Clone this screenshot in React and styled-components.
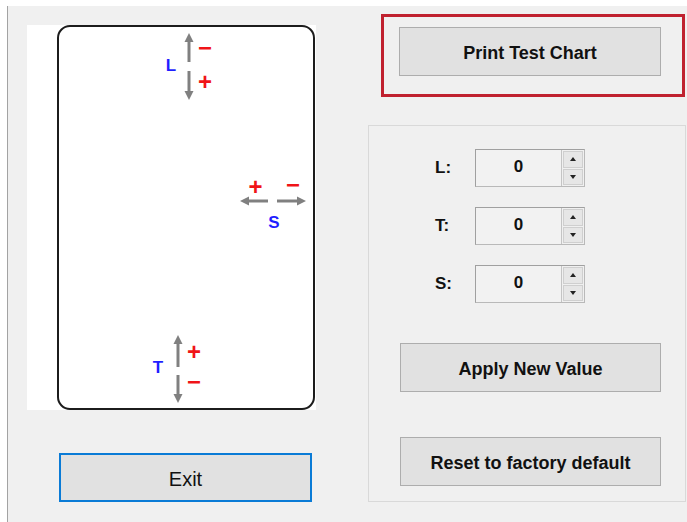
import React from "react";
import styled, { createGlobalStyle } from "styled-components";

const GlobalStyle = createGlobalStyle`
  html, body {
    margin: 0;
    padding: 0;
    background: #ffffff;
    font-family: "Liberation Sans", Arial, sans-serif;
  }
`;

const Window = styled.div`
  display: flex;
  align-items: flex-start;
  margin: 6px 0 0 7px;
  height: 516px;
  border-left: 1px solid #a3a3a3;
  background: #f0f0f0;
  box-sizing: border-box;
`;

const LeftCol = styled.div`
  display: flex;
  flex-direction: column;
  padding: 19px 0 0 19px;
  width: 289px;
  flex-shrink: 0;
`;

const Picture = styled.div`
  width: 289px;
  height: 385px;
  background: #ffffff;
  display: flex;
`;

const Card = styled.div`
  position: relative;
  margin-left: 30px;
  width: 258px;
  height: 385px;
  box-sizing: border-box;
  border: 2px solid #1c1c1c;
  border-radius: 13px;
`;

const Arrows = styled.svg`
  position: absolute;
  left: 0;
  top: 0;
  width: 100%;
  height: 100%;
`;

const Mark = styled.span`
  position: absolute;
  transform: translate(-50%, -50%);
  line-height: 1;
  font-weight: bold;
  font-family: "Liberation Sans", Arial, sans-serif;
  font-size: ${(p) => (p.$sign ? "24px" : "17px")};
  color: ${(p) => (p.$sign ? "#f01418" : "#1f1fff")};
  white-space: nowrap;
`;

const Button = styled.button`
  display: flex;
  align-items: center;
  justify-content: center;
  width: 262px;
  height: 49px;
  padding: 3px 0 0;
  box-sizing: border-box;
  background: #e1e1e1;
  border: 1px solid #adadad;
  font-family: "Liberation Sans", Arial, sans-serif;
  font-size: 18px;
  font-weight: bold;
  color: #111;
  margin-top: ${(p) => p.$top || 0}px;
`;

const ExitButton = styled(Button)`
  width: 253px;
  margin: 43px 0 0 32px;
  border: 2px solid #0a7bd6;
  font-weight: normal;
  font-size: 20px;
`;

const RightCol = styled.div`
  display: flex;
  flex-direction: column;
  margin: 8px 0 0 52px;
`;

const Highlight = styled.div`
  margin-left: 13px;
  width: 304px;
  height: 83px;
  box-sizing: border-box;
  border: 3px solid #c0212f;
  padding: 10px 0 0 15px;
`;

const GroupBox = styled.div`
  display: flex;
  flex-direction: column;
  margin-top: 28px;
  width: 318px;
  height: 377px;
  box-sizing: border-box;
  border: 1px solid #d9d9d9;
  padding: 23px 0 0 31px;
`;

const SpinRow = styled.div`
  display: flex;
  align-items: center;
  height: 38px;
  margin-bottom: 20px;
`;

const SpinLabel = styled.span`
  width: 40px;
  margin-left: 35px;
  font-size: 17px;
  font-weight: bold;
  color: #111;
`;

const Spinner = styled.div`
  display: flex;
  width: 110px;
  height: 38px;
  box-sizing: border-box;
  border: 1px solid #b9b9b9;
  border-top-color: #a0a0a0;
  border-left-color: #a0a0a0;
`;

const Field = styled.div`
  flex: 1;
  display: flex;
  align-items: center;
  justify-content: center;
  background: #f2f2f2;
  border-right: 1px solid #c4c4c4;
  font-size: 17px;
  font-weight: bold;
  color: #111;
  padding-bottom: 3px;
`;

const Steps = styled.div`
  display: flex;
  flex-direction: column;
  width: 22px;
  padding: 1px;
  gap: 1px;
  box-sizing: border-box;
`;

const Step = styled.div`
  flex: 1;
  display: flex;
  align-items: center;
  justify-content: center;
  background: #e6e6e6;
  border: 1px solid #cfcfcf;

  &::after {
    content: "";
    border-left: 3.5px solid transparent;
    border-right: 3.5px solid transparent;
    ${(p) =>
      p.$down ? "border-top: 4px solid #222;" : "border-bottom: 4px solid #222;"}
  }
`;

const GroupButton = styled(Button)`
  width: 261px;
`;

const arrowColor = "#808080";

const Arrow = ({ x1, y1, x2, y2 }) => {
  const dx = x2 - x1;
  const dy = y2 - y1;
  const len = Math.hypot(dx, dy);
  const ux = dx / len;
  const uy = dy / len;
  const head = 9;
  const half = 4.5;
  const bx = x2 - ux * head;
  const by = y2 - uy * head;
  const pts = `${x2},${y2} ${bx - uy * half},${by + ux * half} ${bx + uy * half},${by - ux * half}`;
  return (
    <g>
      <line x1={x1} y1={y1} x2={bx} y2={by} stroke={arrowColor} strokeWidth="3" />
      <polygon points={pts} fill={arrowColor} />
    </g>
  );
};

const Spin = ({ label }) => (
  <SpinRow>
    <SpinLabel>{label}</SpinLabel>
    <Spinner>
      <Field>0</Field>
      <Steps>
        <Step />
        <Step $down />
      </Steps>
    </Spinner>
  </SpinRow>
);

export default function App() {
  return (
    <>
      <GlobalStyle />
      <Window>
        <LeftCol>
          <Picture>
            <Card>
              <Arrows>
                <Arrow x1={130} y1={35} x2={130} y2={6} />
                <Arrow x1={130} y1={44} x2={130} y2={73} />
                <Arrow x1={209} y1={174} x2={181} y2={174} />
                <Arrow x1={218} y1={174} x2={247} y2={174} />
                <Arrow x1={119} y1={340} x2={119} y2={308} />
                <Arrow x1={119} y1={348} x2={119} y2={376} />
              </Arrows>
              <Mark style={{ left: 112, top: 37.5 }}>L</Mark>
              <Mark $sign style={{ left: 146, top: 21 }}>−</Mark>
              <Mark $sign style={{ left: 146, top: 54.5 }}>+</Mark>
              <Mark $sign style={{ left: 196.5, top: 159.5 }}>+</Mark>
              <Mark $sign style={{ left: 234, top: 158 }}>−</Mark>
              <Mark style={{ left: 215, top: 195 }}>S</Mark>
              <Mark style={{ left: 99, top: 339.5 }}>T</Mark>
              <Mark $sign style={{ left: 135, top: 324.5 }}>+</Mark>
              <Mark $sign style={{ left: 135, top: 355 }}>−</Mark>
            </Card>
          </Picture>
          <ExitButton>Exit</ExitButton>
        </LeftCol>
        <RightCol>
          <Highlight>
            <Button>Print Test Chart</Button>
          </Highlight>
          <GroupBox>
            <Spin label="L:" />
            <Spin label="T:" />
            <Spin label="S:" />
            <GroupButton $top={20}>Apply New Value</GroupButton>
            <GroupButton $top={45}>Reset to factory default</GroupButton>
          </GroupBox>
        </RightCol>
      </Window>
    </>
  );
}
